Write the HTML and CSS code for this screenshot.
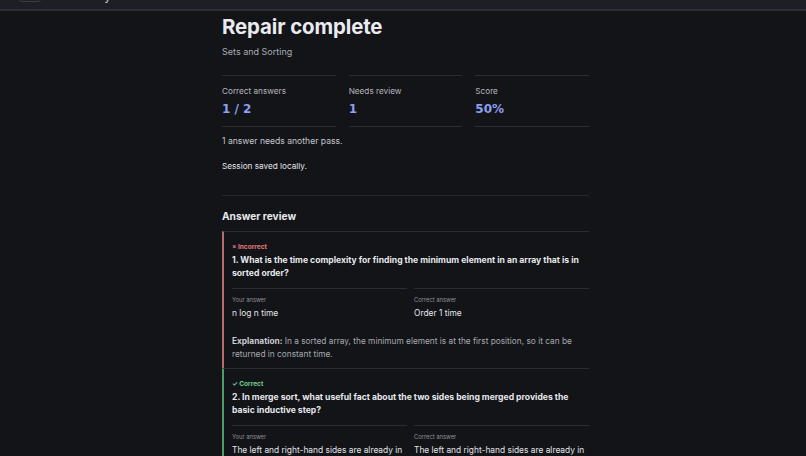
FILE: index.html
```html
<!DOCTYPE html>
<html lang="en">
<head>
<meta charset="utf-8">
<title>Repair complete</title>
<link rel="stylesheet" href="styles.css">
</head>
<body>
<header class="topbar">
  <button class="back-btn" type="button" aria-label="Back"></button>
  <span class="topbar-title">Study</span>
</header>
<main class="page">
  <div class="content">
    <h1 class="title">Repair complete</h1>
    <p class="subtitle">Sets and Sorting</p>

    <div class="stats">
      <div class="stat">
        <div class="stat-label">Correct answers</div>
        <div class="stat-value">1 / 2</div>
      </div>
      <div class="stat">
        <div class="stat-label">Needs review</div>
        <div class="stat-value">1</div>
      </div>
      <div class="stat">
        <div class="stat-label">Score</div>
        <div class="stat-value">50%</div>
      </div>
    </div>

    <p class="note">1 answer needs another pass.</p>
    <p class="saved">Session saved locally.</p>

    <section class="review">
      <h2 class="review-title">Answer review</h2>

      <article class="card card-wrong">
        <div class="status status-wrong">× Incorrect</div>
        <h3 class="question">1. What is the time complexity for finding the minimum element in an array that is in sorted order?</h3>
        <div class="answers">
          <div class="answer">
            <div class="answer-label">Your answer</div>
            <div class="answer-value">n log n time</div>
          </div>
          <div class="answer">
            <div class="answer-label">Correct answer</div>
            <div class="answer-value">Order 1 time</div>
          </div>
        </div>
        <p class="explanation"><strong>Explanation:</strong> In a sorted array, the minimum element is at the first position, so it can be returned in constant time.</p>
      </article>

      <article class="card card-right">
        <div class="status status-right">✓ Correct</div>
        <h3 class="question">2. In merge sort, what useful fact about the two sides being merged provides the basic inductive step?</h3>
        <div class="answers">
          <div class="answer">
            <div class="answer-label">Your answer</div>
            <div class="answer-value">The left and right-hand sides are already in sorted order.</div>
          </div>
          <div class="answer">
            <div class="answer-label">Correct answer</div>
            <div class="answer-value">The left and right-hand sides are already in sorted order.</div>
          </div>
        </div>
      </article>
    </section>
  </div>
</main>
</body>
</html>
```

FILE: styles.css
```css
* { box-sizing: border-box; }

html, body {
  margin: 0;
  padding: 0;
  background: #131418;
  color: #e6e8ec;
  font-family: Inter, "Noto Sans", "Liberation Sans", sans-serif;
  overflow: hidden;
}

.topbar {
  height: 11px;
  background: #1d1f24;
  border-bottom: 2px solid #2b2e34;
  display: flex;
  align-items: flex-end;
  padding-left: 19px;
  overflow: hidden;
}

.back-btn {
  flex: none;
  width: 22px;
  height: 24px;
  margin-bottom: 7px;
  background: transparent;
  border: 1px solid #3a3d44;
  border-radius: 3px;
  padding: 0;
}

.topbar-title {
  margin-left: 37px;
  margin-bottom: 6px;
  font-size: 12px;
  line-height: 14px;
  color: #c8cbd1;
}

.page {
  display: flex;
  justify-content: center;
  padding-left: 5px;
}

.content {
  width: 367px;
  padding-top: 4px;
}

.title {
  margin: 0;
  font-size: 20.4px;
  line-height: 24px;
  font-weight: 700;
  color: #e9ebf0;
  letter-spacing: -0.1px;
}

.subtitle {
  margin: 6px 0 0;
  font-size: 9px;
  line-height: 13px;
  color: #a8acb4;
}

.stats {
  margin-top: 17px;
  display: grid;
  grid-template-columns: repeat(3, 1fr);
  column-gap: 13px;
}

.stat {
  border-top: 1px solid #2a2c31;
  border-bottom: 1px solid #2a2c31;
  padding: 9px 0 9px;
}

.stat-label {
  font-size: 8.2px;
  line-height: 12px;
  color: #b3b6bd;
}

.stat-value {
  margin-top: 4px;
  font-family: "DejaVu Sans", "Liberation Sans", sans-serif;
  font-weight: 700;
  font-size: 12px;
  line-height: 16px;
  color: #8d9ff0;
}

.note {
  margin: 8px 0 0;
  font-size: 8.6px;
  line-height: 12px;
  color: #c4c7cd;
}

.saved {
  margin: 13px 0 0;
  font-size: 8.2px;
  line-height: 12px;
  color: #e2e4e8;
}

.review {
  margin-top: 23px;
  border-top: 1px solid #26282d;
}

.review-title {
  margin: 13px 0 0;
  font-size: 10.2px;
  line-height: 14px;
  font-weight: 700;
  color: #e6e8ec;
}

.card {
  border-top: 1px solid #2a2c31;
  border-left: 2px solid #b86b70;
  padding: 11px 0 7px 8px;
}

.review-title + .card { margin-top: 8px; }

.card-right { border-left-color: #4f9c69; }

.status {
  font-size: 6.5px;
  line-height: 9px;
  font-weight: 700;
}
.status-wrong { color: #e47a7f; }
.status-right { color: #6fcf8c; }

.question {
  margin: 2px 0 0;
  font-size: 8.6px;
  line-height: 13px;
  font-weight: 700;
  color: #e6e8ec;
}

.answers {
  margin-top: 8px;
  display: grid;
  grid-template-columns: 1fr 1fr;
  column-gap: 7px;
}

.answer {
  border-top: 1px solid #2a2c31;
  padding-top: 7px;
}

.answer-label {
  font-size: 5.8px;
  line-height: 8px;
  color: #8f939b;
}

.answer-value {
  margin-top: 3px;
  font-size: 8.4px;
  line-height: 13px;
  color: #e2e4e8;
}

.explanation {
  margin: 15px 0 0;
  font-size: 8.3px;
  line-height: 13px;
  color: #a6aab1;
}

.explanation strong {
  color: #c9ccd2;
  font-weight: 700;
}
```
